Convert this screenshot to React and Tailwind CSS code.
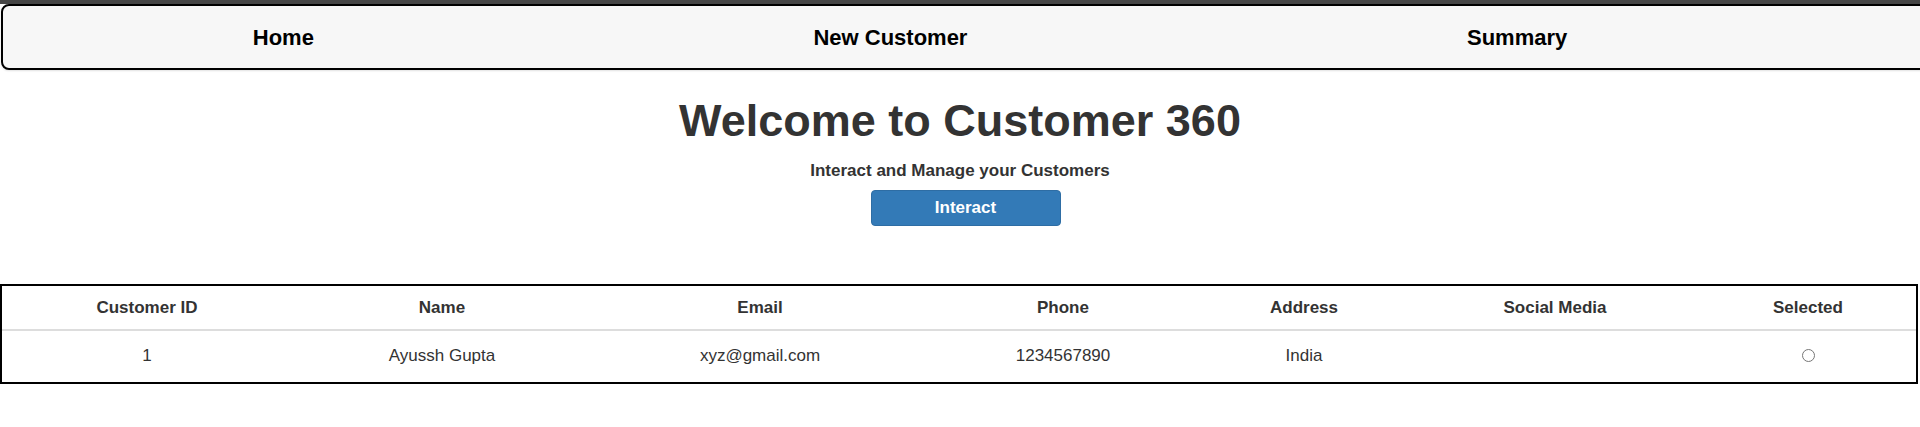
import React from 'react';

const columns = [
  { label: 'Customer ID', width: 'w-[290px]' },
  { label: 'Name', width: 'w-[300px]' },
  { label: 'Email', width: 'w-[336px]' },
  { label: 'Phone', width: 'w-[270px]' },
  { label: 'Address', width: 'w-[212px]' },
  { label: 'Social Media', width: 'w-[290px]' },
  { label: 'Selected', width: 'flex-1' },
];

const customers = [
  { id: 1, name: 'Ayussh Gupta', email: 'xyz@gmail.com', phone: '1234567890', address: 'India', social: '' },
];

export default function App() {
  return (
    <div className="min-h-[427px] overflow-hidden bg-white font-['Liberation_Sans',Arial,sans-serif]">
      <div className="h-[4px] bg-[#464646]" />

      {/* top nav */}
      <nav className="ml-[1px] w-[1940px] h-[66px] rounded-l-lg border-2 border-black bg-[#f7f7f7] flex items-center shadow-[0_1px_2px_rgba(0,0,0,0.12)]">
        <div className="w-[1814px] flex justify-around items-center">
          <a className="text-[22px] font-bold text-black">Home</a>
          <a className="text-[22px] font-bold text-black">New Customer</a>
          <a className="text-[22px] font-bold text-black">Summary</a>
        </div>
      </nav>

      {/* hero */}
      <div className="flex flex-col items-center pt-[25px]">
        <h1 className="text-[45px] leading-[52px] font-bold text-[#333]">Welcome to Customer 360</h1>
        <p className="mt-[14px] text-[17px] leading-[20px] font-bold text-[#333]">Interact and Manage your Customers</p>
        <button className="mt-[9px] ml-[11px] w-[190px] h-[36px] rounded-[4px] border border-[#2e6da4] bg-[#337ab7] text-white text-[17px] font-bold">
          Interact
        </button>
      </div>

      {/* customers table */}
      <div className="mt-[58px] w-[1918px] border-2 border-black">
        <div className="flex items-center h-[45px] border-b-2 border-[#dddddd]">
          {columns.map(col => (
            <div key={col.label} className={`${col.width} text-center text-[17px] font-bold text-[#333]`}>
              {col.label}
            </div>
          ))}
        </div>
        {customers.map(c => (
          <div key={c.id} className="flex items-center h-[51px] pb-[2px] text-[17px] text-[#333]">
            <div className="w-[290px] text-center">{c.id}</div>
            <div className="w-[300px] text-center">{c.name}</div>
            <div className="w-[336px] text-center">{c.email}</div>
            <div className="w-[270px] text-center">{c.phone}</div>
            <div className="w-[212px] text-center">{c.address}</div>
            <div className="w-[290px] text-center">{c.social}</div>
            <div className="flex-1 flex justify-center">
              <input type="radio" name="selected" className="w-[13px] h-[13px] m-0" />
            </div>
          </div>
        ))}
      </div>
    </div>
  );
}
